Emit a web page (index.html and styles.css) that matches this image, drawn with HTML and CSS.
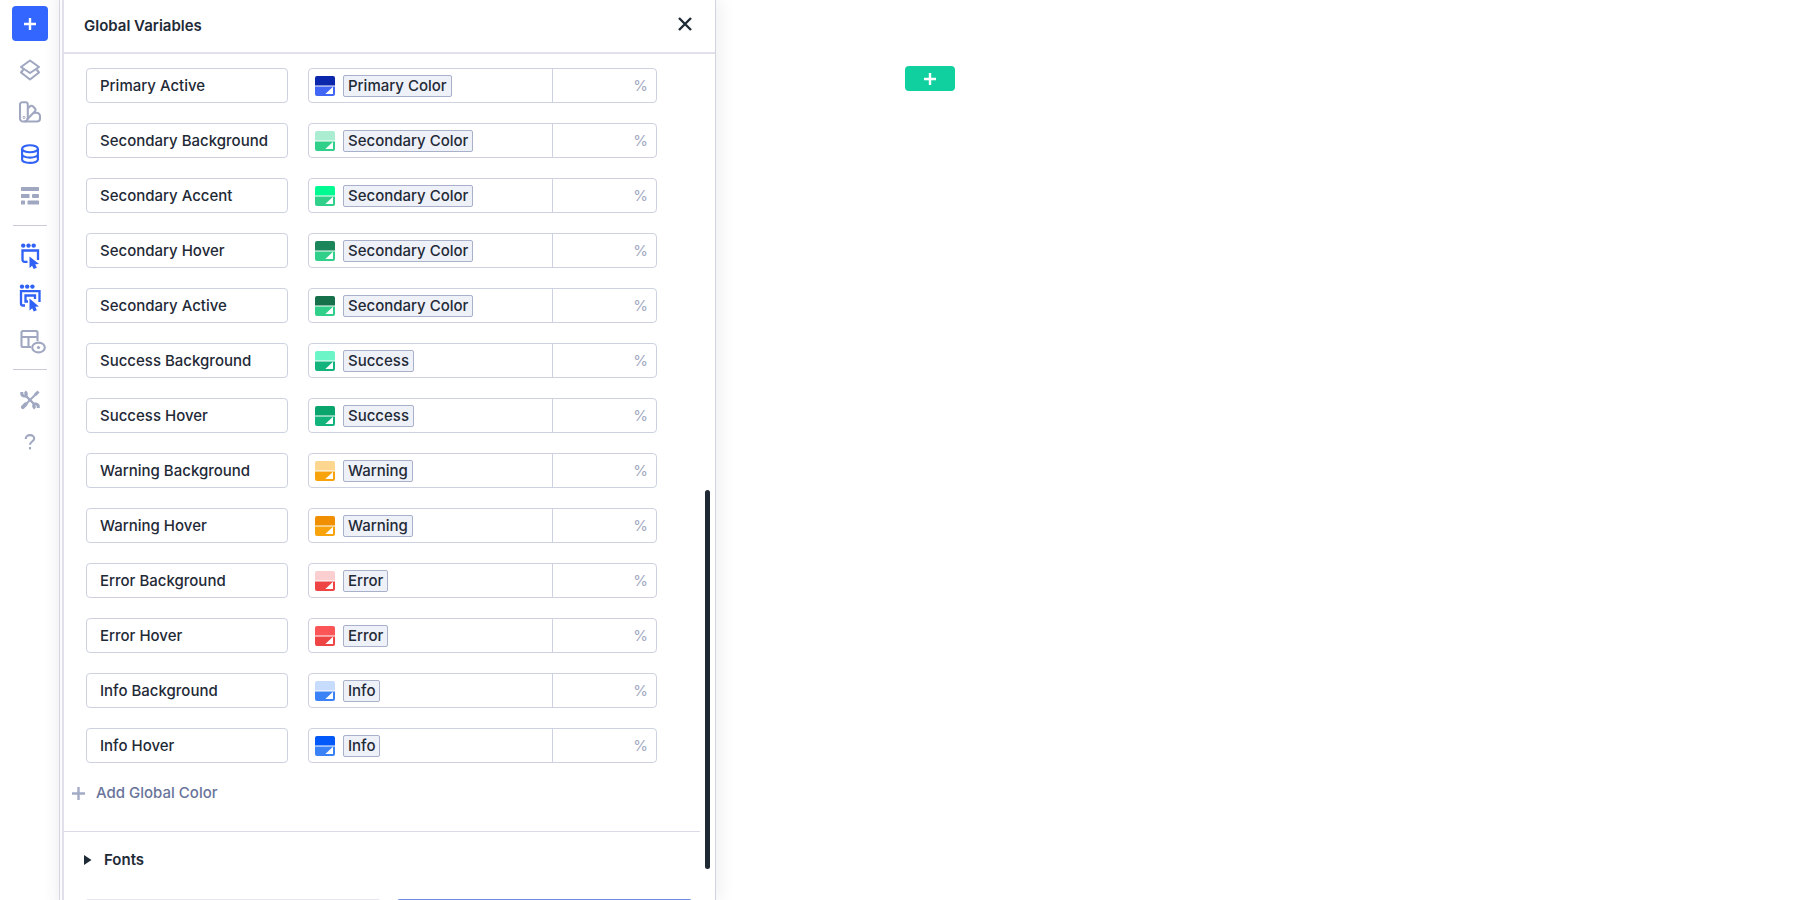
FILE: index.html
```
<!DOCTYPE html>
<html lang="en">
<head>
    <meta charset="UTF-8">
    <meta name="viewport" content="width=device-width, initial-scale=1.0">
    <title>Global Variables</title>
    <link rel="stylesheet" href="styles.css">
</head>
<body>
    <!-- shared swatch shape: variable colour on top, base colour below -->
    <svg class="defs" width="0" height="0" aria-hidden="true">
        <symbol id="swatch" viewBox="0 0 20 20">
            <path fill="currentColor" d="M2 0h16a2 2 0 0 1 2 2v7.5H0V2a2 2 0 0 1 2-2z"/>
            <path d="M0 10.5h20V18a2 2 0 0 1-2 2H2a2 2 0 0 1-2-2z"/>
            <path fill="#fff" d="M10.3 18 18 10.8V18z"/>
        </symbol>
    </svg>

    <nav class="rail">
        <button class="rail-add" aria-label="Add element">
            <svg width="14" height="14" viewBox="0 0 14 14"><path d="M7 1v12M1 7h12" stroke="#fff" stroke-width="2.4"/></svg>
        </button>
        <button class="rail-btn" aria-label="Layers">
            <svg width="22" height="22" viewBox="0 0 22 22" fill="none" stroke="currentColor" stroke-width="2.1" stroke-linejoin="round" stroke-linecap="round"><path d="M11 1.500 20 8 11 14 2 8z"/><path d="M4 11 2 13.500 11 20.500l9-7-2-2.500"/></svg>
        </button>
        <button class="rail-btn" aria-label="Styles">
            <svg width="22" height="22" viewBox="0 0 22 22" fill="none" stroke="currentColor" stroke-width="2.1" stroke-linejoin="round"><path d="M5.500 20.500H4a3 3 0 0 1-3-3v-14a2.300 2.300 0 0 1 2.300-2.300h3.200a2.300 2.300 0 0 1 2.300 2.300v13.500a3.500 3.500 0 0 1-3.300 3.500z"/><path d="M8.800 7.500l2-2a2.300 2.300 0 0 1 3.300 0l1.700 1.700a2.300 2.300 0 0 1 0 3.300L8 18.500"/><path d="M14.500 12l3-.2a3.300 3.300 0 0 1 3.500 3.300v2.400a3 3 0 0 1-3 3H5.500"/><circle cx="5" cy="16.500" r=".4"/></svg>
        </button>
        <button class="rail-btn active" aria-label="Global variables">
            <svg width="20" height="20" viewBox="0 0 20 20" fill="none" stroke="currentColor" stroke-width="2.1"><ellipse cx="10" cy="4.800" rx="7.900" ry="3.500"/><path d="M2.100 4.800v10.800c0 1.900 3.500 3.300 7.900 3.300s7.900-1.400 7.900-3.300V4.800M2.100 10.200c0 1.900 3.500 3.400 7.900 3.400s7.900-1.500 7.900-3.400"/></svg>
        </button>
        <button class="rail-btn" aria-label="Selectors">
            <svg width="18" height="18" viewBox="0 0 18 18" fill="currentColor"><rect width="18" height="4" rx=".6"/><rect y="7" width="8.500" height="4" rx=".6"/><rect x="11" y="7" width="7" height="4" rx="1"/><rect y="13.500" width="4" height="4" rx=".6"/><rect x="6.500" y="13.500" width="11.500" height="4" rx=".6"/></svg>
        </button>
        <hr class="rail-line">
        <button class="rail-btn active" aria-label="Select mode">
            <svg width="20" height="26" viewBox="0 0 20 26" fill="none" stroke="currentColor" stroke-width="2.3"><g fill="currentColor" stroke="none"><circle cx="3.200" cy="2.600" r="2.200"/><circle cx="8.500" cy="2.600" r="2.200"/><circle cx="13.700" cy="2.600" r="2.200"/><path d="M9.500 13.500v11.500l2.600-2.200 1.500 3.200 3.200-1.300-1.500-3.400 3.700-.3z"/></g><path d="M7.500 18.800H4.500a2 2 0 0 1-2-2V7.500H18V17"/></svg>
        </button>
        <button class="rail-btn active" aria-label="Multi select mode">
            <svg width="22" height="28" viewBox="0 0 22 28" fill="none" stroke="currentColor" stroke-width="2.3"><g fill="currentColor" stroke="none"><circle cx="3" cy="2.600" r="2.200"/><circle cx="8.200" cy="2.600" r="2.200"/><circle cx="13.400" cy="2.600" r="2.200"/><path d="M10.500 14.500v12l2.700-2.300 1.500 3.300 3.100-1.300-1.500-3.400 3.600-.3z"/></g><path d="M6 21.500H4a2 2 0 0 1-2-2V7.200h18.500V18"/><path d="M9 17.500H6.500v-6H16V15"/></svg>
        </button>
        <button class="rail-btn preview" aria-label="Preview layout">
            <svg width="26" height="26" viewBox="0 0 26 26" fill="none" stroke="currentColor" stroke-width="2.1"><path d="M11 18H3a1.500 1.500 0 0 1-1.500-1.500v-13A1.500 1.500 0 0 1 3 2h13a1.500 1.500 0 0 1 1.500 1.500V12M1.500 8h16M8.500 8v10"/><ellipse cx="18.500" cy="18.500" rx="6.300" ry="4.900"/><circle cx="18.500" cy="18.500" r="1.600" fill="currentColor" stroke="none"/></svg>
        </button>
        <hr class="rail-line">
        <button class="rail-btn" aria-label="Tools">
            <svg width="20" height="20" viewBox="0 0 20 20" fill="none" stroke="currentColor"><path stroke-width="2.400" d="M5.500 5.500l9 9"/><path stroke-width="3" d="M1.800 2v2.300a3 3 0 0 0 4 1.500 3 3 0 0 0-1-4M18.200 18v-2.300a3 3 0 0 0-4-1.500 3 3 0 0 0 1 4" /><path stroke-width="2" d="M6.500 13.500 16 4"/><path stroke-width="3.800" stroke-linecap="round" d="M2.800 17.200 5.800 14.200"/><path stroke-width="3" d="M15 5l3.500-3.500"/></svg>
        </button>
        <button class="rail-btn" aria-label="Help">
            <svg width="12" height="16" viewBox="0 0 12 16" fill="none" stroke="currentColor" stroke-width="2.1"><path d="M1.800 5V4.400A4 3.400 0 0 1 6 1.100a4 3.400 0 0 1 4.200 3.400c0 3-4.200 3-4.200 6.200"/><path d="M6 13v2.400"/></svg>
        </button>
    </nav>

    <aside class="panel">
        <header class="panel-header">
            <h1>Global Variables</h1>
            <button class="close" aria-label="Close">
                <svg width="14" height="14" viewBox="0 0 14 14"><path d="M1 1l12 12M13 1 1 13" stroke="currentColor" stroke-width="2.400"/></svg>
            </button>
        </header>

        <div class="panel-body">
            <div class="content">
                <div class="rows">
                    <div class="row">
                        <input class="name" type="text" value="Primary Active" aria-label="Variable name">
                        <div class="value"><svg class="swatch primary-active"><use href="#swatch"/></svg><button class="chip">Primary Color</button><input class="amount" type="text" placeholder="%" aria-label="Amount"></div>
                    </div>
                    <div class="row">
                        <input class="name" type="text" value="Secondary Background" aria-label="Variable name">
                        <div class="value"><svg class="swatch secondary-bg"><use href="#swatch"/></svg><button class="chip">Secondary Color</button><input class="amount" type="text" placeholder="%" aria-label="Amount"></div>
                    </div>
                    <div class="row">
                        <input class="name" type="text" value="Secondary Accent" aria-label="Variable name">
                        <div class="value"><svg class="swatch secondary-accent"><use href="#swatch"/></svg><button class="chip">Secondary Color</button><input class="amount" type="text" placeholder="%" aria-label="Amount"></div>
                    </div>
                    <div class="row">
                        <input class="name" type="text" value="Secondary Hover" aria-label="Variable name">
                        <div class="value"><svg class="swatch secondary-hover"><use href="#swatch"/></svg><button class="chip">Secondary Color</button><input class="amount" type="text" placeholder="%" aria-label="Amount"></div>
                    </div>
                    <div class="row">
                        <input class="name" type="text" value="Secondary Active" aria-label="Variable name">
                        <div class="value"><svg class="swatch secondary-active"><use href="#swatch"/></svg><button class="chip">Secondary Color</button><input class="amount" type="text" placeholder="%" aria-label="Amount"></div>
                    </div>
                    <div class="row">
                        <input class="name" type="text" value="Success Background" aria-label="Variable name">
                        <div class="value"><svg class="swatch success-bg"><use href="#swatch"/></svg><button class="chip">Success</button><input class="amount" type="text" placeholder="%" aria-label="Amount"></div>
                    </div>
                    <div class="row">
                        <input class="name" type="text" value="Success Hover" aria-label="Variable name">
                        <div class="value"><svg class="swatch success-hover"><use href="#swatch"/></svg><button class="chip">Success</button><input class="amount" type="text" placeholder="%" aria-label="Amount"></div>
                    </div>
                    <div class="row">
                        <input class="name" type="text" value="Warning Background" aria-label="Variable name">
                        <div class="value"><svg class="swatch warning-bg"><use href="#swatch"/></svg><button class="chip">Warning</button><input class="amount" type="text" placeholder="%" aria-label="Amount"></div>
                    </div>
                    <div class="row">
                        <input class="name" type="text" value="Warning Hover" aria-label="Variable name">
                        <div class="value"><svg class="swatch warning-hover"><use href="#swatch"/></svg><button class="chip">Warning</button><input class="amount" type="text" placeholder="%" aria-label="Amount"></div>
                    </div>
                    <div class="row">
                        <input class="name" type="text" value="Error Background" aria-label="Variable name">
                        <div class="value"><svg class="swatch error-bg"><use href="#swatch"/></svg><button class="chip">Error</button><input class="amount" type="text" placeholder="%" aria-label="Amount"></div>
                    </div>
                    <div class="row">
                        <input class="name" type="text" value="Error Hover" aria-label="Variable name">
                        <div class="value"><svg class="swatch error-hover"><use href="#swatch"/></svg><button class="chip">Error</button><input class="amount" type="text" placeholder="%" aria-label="Amount"></div>
                    </div>
                    <div class="row">
                        <input class="name" type="text" value="Info Background" aria-label="Variable name">
                        <div class="value"><svg class="swatch info-bg"><use href="#swatch"/></svg><button class="chip">Info</button><input class="amount" type="text" placeholder="%" aria-label="Amount"></div>
                    </div>
                    <div class="row">
                        <input class="name" type="text" value="Info Hover" aria-label="Variable name">
                        <div class="value"><svg class="swatch info-hover"><use href="#swatch"/></svg><button class="chip">Info</button><input class="amount" type="text" placeholder="%" aria-label="Amount"></div>
                    </div>
                </div>

                <button class="add-color">
                    <svg width="13" height="13" viewBox="0 0 13 13"><path d="M6.500 0v13M0 6.500h13" stroke="#a3abc6" stroke-width="2.4"/></svg>
                    Add Global Color
                </button>

                <button class="section">
                    <svg width="8" height="10" viewBox="0 0 8 10"><path d="M0 0l7.500 5L0 10z" fill="currentColor"/></svg>
                    Fonts
                </button>

                <div class="actions">
                    <button class="discard" aria-label="Discard"></button>
                    <button class="save" aria-label="Save"></button>
                </div>
            </div>
            <div class="track"><div class="thumb"></div></div>
        </div>
    </aside>

    <main class="canvas">
        <button class="canvas-add" aria-label="Add section">
            <svg width="14" height="14" viewBox="0 0 14 14"><path d="M7 1v12M1 7h12" stroke="#fff" stroke-width="2.4"/></svg>
        </button>
    </main>
</body>
</html>
```
FILE: styles.css
```
* {
    box-sizing: border-box;
}
body {
    margin: 0;
    height: 100vh;
    overflow: hidden;
    display: flex;
    background-color: #fff;
    color: #1f2a37;
    font-family: Inter, sans-serif;
    font-size: 15px;
    line-height: 20px;
}
button,
input {
    font: inherit;
    color: inherit;
}
button {
    padding: 0;
    border: none;
    background: none;
    cursor: pointer;
}
.defs {
    position: absolute;
}

/* left rail */
.rail {
    width: 60px;
    flex-shrink: 0;
    display: flex;
    flex-direction: column;
    align-items: center;
    padding-top: 6px;
    border-right: 1px solid #d9dae5;
    background: linear-gradient(to right, #fff 75%, #f7f7fa);
}
.rail-add {
    width: 36px;
    height: 35px;
    margin-bottom: 8px;
    flex-shrink: 0;
    display: flex;
    align-items: center;
    justify-content: center;
    border-radius: 4px;
    background-color: #3366ff;
}
.rail-btn {
    width: 32px;
    height: 42px;
    flex-shrink: 0;
    display: flex;
    align-items: center;
    justify-content: center;
    color: #a0a7c0;
}
.rail-btn.active {
    color: #2f62f5;
}
.rail-btn.preview {
    justify-content: flex-end;
    padding-top: 4px;
}
.rail-btn svg {
    flex-shrink: 0;
}
.rail-line {
    width: 34px;
    height: 1px;
    margin: 8px 0 9px;
    border: none;
    background-color: #c9cbd9;
}

/* variables panel */
.panel {
    width: 654px;
    flex-shrink: 0;
    margin-left: 2px;
    display: flex;
    flex-direction: column;
    border-left: 2px solid #dfe0ea;
    border-right: 1px solid #d0d4e2;
    background-color: #fff;
    box-shadow: 4px 0 16px rgba(30, 30, 60, 0.07);
}
.panel-header {
    height: 54px;
    flex-shrink: 0;
    display: flex;
    align-items: center;
    justify-content: space-between;
    padding: 0 22px 0 20px;
    border-bottom: 2px solid #e0e1eb;
}
.panel-header h1 {
    margin: 0;
    font-size: 15px;
    font-weight: 600;
}
.close {
    width: 16px;
    height: 24px;
    margin-bottom: 4px;
}
.close svg {
    display: block;
    margin: auto;
}
.panel-body {
    flex: 1;
    min-height: 0;
    display: flex;
}
.content {
    flex: 1;
    overflow: hidden;
}
.rows {
    display: flex;
    flex-direction: column;
    gap: 20px;
    padding: 14px 43px 0 22px;
}
.row {
    height: 35px;
    display: flex;
    gap: 20px;
}
.name {
    width: 202px;
    padding: 0 13px;
    border: 1px solid #cdd1e0;
    border-radius: 4px;
    background-color: #fff;
    font-weight: 500;
}
.value {
    flex: 1;
    display: flex;
    align-items: center;
    padding-left: 6px;
    border: 1px solid #cdd1e0;
    border-radius: 4px;
}
.swatch {
    width: 20px;
    height: 20px;
    margin-right: 8px;
}
.chip {
    padding: 0 4px;
    border: 1px solid #a9b0c9;
    border-radius: 2px;
    background-color: #eff1f9;
    font-weight: 500;
}
.amount {
    width: 104px;
    height: 100%;
    margin-left: auto;
    padding: 0 8px;
    border: none;
    border-left: 1px solid #cdd1e0;
    background: none;
    text-align: right;
}
.amount::placeholder {
    color: #a3a9c2;
}

/* top half uses color, bottom half uses fill */
.primary-active {
    color: #0b27ab;
    fill: #4166f5;
}
.secondary-bg {
    color: #aaedd0;
    fill: #30d08a;
}
.secondary-accent {
    color: #00fa92;
    fill: #30d08a;
}
.secondary-hover {
    color: #1a8659;
    fill: #30d08a;
}
.secondary-active {
    color: #16714b;
    fill: #30d08a;
}
.success-bg {
    color: #6cf5c6;
    fill: #12b47c;
}
.success-hover {
    color: #09a56c;
    fill: #12b47c;
}
.warning-bg {
    color: #fdd68f;
    fill: #f8a30b;
}
.warning-hover {
    color: #f09000;
    fill: #f8a30b;
}
.error-bg {
    color: #fbcfd0;
    fill: #ee4444;
}
.error-hover {
    color: #fb5558;
    fill: #ee4444;
}
.info-bg {
    color: #c7dcfc;
    fill: #3b82f6;
}
.info-hover {
    color: #0459fb;
    fill: #3b82f6;
}

.add-color {
    display: flex;
    align-items: center;
    gap: 11px;
    margin: 20px 0 28px 8px;
    color: #69749b;
    font-weight: 500;
}
.section {
    width: 100%;
    height: 56px;
    display: flex;
    align-items: center;
    gap: 12px;
    padding-left: 20px;
    border-top: 1px solid #dadbe6;
    font-weight: 600;
}
.actions {
    display: grid;
    grid-template-columns: 1fr 1fr;
    gap: 14px;
    padding: 12px 7px 12px 20px;
}
.actions button {
    height: 40px;
    border-radius: 4px;
}
.discard {
    border: 1px solid #e6e7ee;
}
.save {
    border: 1px solid #6f8ae0;
    background-color: #3366ff;
}
.track {
    width: 15px;
    display: flex;
    flex-direction: column;
    justify-content: flex-end;
    align-items: center;
    padding: 0 5px 31px;
}
.thumb {
    width: 5px;
    height: 46.5%;
    border-radius: 3px;
    background-color: #1f2933;
}

/* page canvas */
.canvas {
    flex: 1;
    padding: 66px 0 0 189px;
}
.canvas-add {
    width: 50px;
    height: 25px;
    display: flex;
    align-items: center;
    justify-content: center;
    border-radius: 4px;
    background-color: #10d09f;
}
```
